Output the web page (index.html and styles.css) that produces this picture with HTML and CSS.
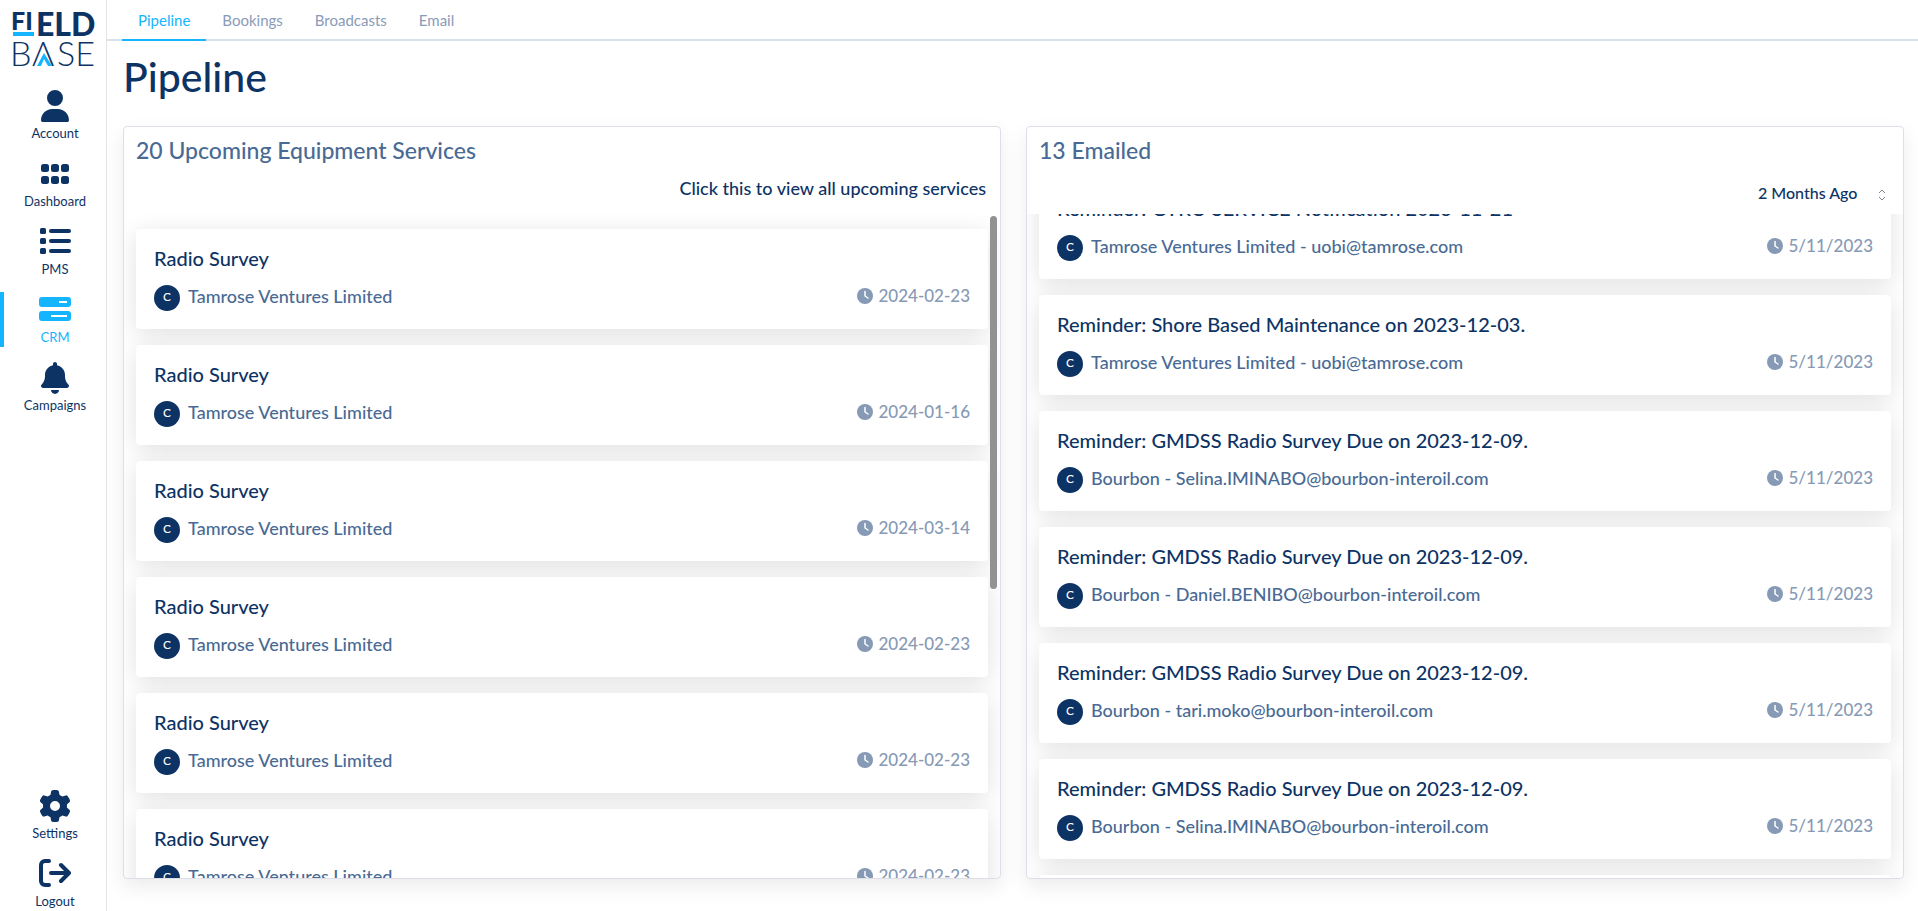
FILE: index.html
```html
<!DOCTYPE html>
<html lang="en">
<head>
<meta charset="utf-8">
<meta name="viewport" content="width=device-width, initial-scale=1">
<title>Pipeline</title>
<link rel="stylesheet" href="styles.css">
</head>
<body>
<svg class="sprite" aria-hidden="true">
  <symbol id="clock" viewBox="0 0 16 16"><circle cx="8" cy="8" r="8" fill="currentColor"/><path d="M8 3.6V8l3 2" fill="none" stroke="#fff" stroke-width="1.5" stroke-linecap="round" stroke-linejoin="round"/></symbol>
</svg>
<div class="app">
  <aside class="sidebar">
    <a class="logo" href="#" aria-label="Field Base">
      <svg width="84" height="64" viewBox="0 0 84 64">
        <text class="logo-bold" x="-1" y="19" font-size="25">FI</text>
        <rect x="1" y="21" width="21" height="4" fill="#14b4ff"/>
        <text class="logo-bold" x="24" y="25" font-size="32">ELD</text>
        <text class="logo-thin" x="-2" y="55" font-size="34">B</text>
        <text class="logo-thin" x="20" y="55" font-size="34">Λ</text>
        <text class="logo-thin" x="45" y="55" font-size="34">SE</text>
        <path d="M25 55l7-13 8 13h-4l-4-7-3 7z" fill="#14b4ff"/>
      </svg>
    </a>
    <nav class="menu">
      <a href="#"><svg width="28" height="32" viewBox="0 0 448 512"><path d="M224 256A128 128 0 1 0 224 0a128 128 0 1 0 0 256zm-45.700 48C79.800 304 0 383.800 0 482.300C0 498.700 13.300 512 29.700 512H418.300c16.400 0 29.700-13.300 29.700-29.700C448 383.800 368.200 304 269.700 304H178.300z"/></svg>Account</a>
      <a href="#"><svg width="28" height="32" viewBox="0 0 28 32"><rect y="6" width="8" height="8" rx="2.500"/><rect x="10" y="6" width="8" height="8" rx="2.500"/><rect x="20" y="6" width="8" height="8" rx="2.500"/><rect y="18" width="8" height="8" rx="2.500"/><rect x="10" y="18" width="8" height="8" rx="2.500"/><rect x="20" y="18" width="8" height="8" rx="2.500"/></svg>Dashboard</a>
      <a href="#"><svg width="32" height="32" viewBox="0 0 32 32"><rect x="1" y="2" width="6" height="6" rx="1.500"/><rect x="1" y="12" width="6" height="6" rx="1.500"/><rect x="1" y="22" width="6" height="6" rx="1.500"/><rect x="10" y="3" width="22" height="4" rx="2"/><rect x="10" y="13" width="22" height="4" rx="2"/><rect x="10" y="23" width="22" height="4" rx="2"/></svg>PMS</a>
      <a href="#" class="active" aria-current="page"><svg width="32" height="32" viewBox="0 0 32 32"><rect y="3" width="32" height="10" rx="3"/><rect y="17" width="32" height="10" rx="3"/><path d="M20 8h8M12 22h16" stroke="#fff" stroke-width="2"/></svg>CRM</a>
      <a href="#"><svg width="28" height="32" viewBox="0 0 448 512"><path d="M224 0c-17.700 0-32 14.300-32 32V51.200C119 66 64 130.600 64 208v18.800c0 47-17.300 92.400-48.500 127.600l-7.400 8.300c-8.400 9.400-10.400 22.900-5.300 34.400S19.400 416 32 416H416c12.600 0 24-7.400 29.200-18.900s3.100-25-5.300-34.400l-7.400-8.300C401.300 319.200 384 273.900 384 226.800V208c0-77.400-55-142-128-156.800V32c0-17.700-14.300-32-32-32zm45.300 493.300c12-12 18.700-28.300 18.700-45.300H224 160c0 17 6.700 33.300 18.700 45.300s28.300 18.700 45.300 18.700s33.300-6.700 45.300-18.700z"/></svg>Campaigns</a>
    </nav>
    <nav class="menu menu-bottom">
      <a href="#"><svg width="32" height="32" viewBox="0 0 512 512"><path d="M495.900 166.600c3.200 8.700 .5 18.400-6.400 24.600l-43.300 39.400c1.100 8.300 1.700 16.800 1.700 25.400s-.6 17.100-1.700 25.400l43.300 39.400c6.900 6.200 9.600 15.900 6.400 24.600c-4.400 11.900-9.700 23.300-15.800 34.300l-4.700 8.100c-6.600 11-14 21.400-22.100 31.200c-5.900 7.200-15.700 9.600-24.500 6.800l-55.700-17.700c-13.400 10.300-28.200 18.900-44 25.400l-12.500 57.100c-2 9.100-9 16.300-18.200 17.800c-13.800 2.300-28 3.500-42.500 3.500s-28.700-1.200-42.500-3.500c-9.200-1.500-16.200-8.700-18.200-17.800l-12.500-57.100c-15.800-6.500-30.600-15.100-44-25.400L83.100 425.900c-8.800 2.800-18.600 .3-24.500-6.800c-8.100-9.800-15.500-20.200-22.100-31.200l-4.700-8.100c-6.100-11-11.400-22.400-15.800-34.300c-3.200-8.700-.5-18.400 6.400-24.600l43.300-39.400C64.600 273.100 64 264.600 64 256s.6-17.100 1.700-25.400L22.400 191.200c-6.900-6.200-9.600-15.900-6.400-24.600c4.400-11.900 9.700-23.300 15.800-34.300l4.700-8.100c6.600-11 14-21.400 22.100-31.200c5.900-7.200 15.700-9.600 24.500-6.800l55.700 17.700c13.400-10.300 28.200-18.900 44-25.400l12.500-57.100c2-9.100 9-16.300 18.200-17.800C227.300 1.200 241.500 0 256 0s28.700 1.200 42.500 3.500c9.200 1.500 16.200 8.700 18.200 17.800l12.500 57.100c15.800 6.500 30.600 15.100 44 25.400l55.700-17.700c8.800-2.800 18.600-.3 24.500 6.800c8.100 9.800 15.500 20.200 22.100 31.200l4.700 8.100c6.100 11 11.400 22.400 15.800 34.300zM256 336a80 80 0 1 0 0-160 80 80 0 1 0 0 160z"/></svg>Settings</a>
      <a href="#"><svg width="32" height="32" viewBox="0 0 32 32"><path d="M10 3H6a4 4 0 0 0-4 4v16a4 4 0 0 0 4 4h4M12 15h18M22 7l8 8-8 8" fill="none" stroke="currentColor" stroke-width="4" stroke-linecap="round" stroke-linejoin="round"/></svg>Logout</a>
    </nav>
  </aside>

  <div class="content">
    <nav class="tabs">
      <a href="#" class="active" aria-current="page">Pipeline</a>
      <a href="#">Bookings</a>
      <a href="#">Broadcasts</a>
      <a href="#">Email</a>
    </nav>
    <main class="main">
      <h1>Pipeline</h1>
      <div class="board">
        <section class="panel">
          <header class="panel-head">
            <h2>20 Upcoming Equipment Services</h2>
            <a class="view-all" href="#">Click this to view all upcoming services</a>
          </header>
          <div class="list">
            <article class="card"><h3>Radio Survey</h3><div class="row"><span class="avatar">C</span><span class="who">Tamrose Ventures Limited</span><time><svg><use href="#clock"/></svg>2024-02-23</time></div></article>
            <article class="card"><h3>Radio Survey</h3><div class="row"><span class="avatar">C</span><span class="who">Tamrose Ventures Limited</span><time><svg><use href="#clock"/></svg>2024-01-16</time></div></article>
            <article class="card"><h3>Radio Survey</h3><div class="row"><span class="avatar">C</span><span class="who">Tamrose Ventures Limited</span><time><svg><use href="#clock"/></svg>2024-03-14</time></div></article>
            <article class="card"><h3>Radio Survey</h3><div class="row"><span class="avatar">C</span><span class="who">Tamrose Ventures Limited</span><time><svg><use href="#clock"/></svg>2024-02-23</time></div></article>
            <article class="card"><h3>Radio Survey</h3><div class="row"><span class="avatar">C</span><span class="who">Tamrose Ventures Limited</span><time><svg><use href="#clock"/></svg>2024-02-23</time></div></article>
            <article class="card"><h3>Radio Survey</h3><div class="row"><span class="avatar">C</span><span class="who">Tamrose Ventures Limited</span><time><svg><use href="#clock"/></svg>2024-02-23</time></div></article>
          </div>
          <span class="thumb"></span>
        </section>
        <section class="panel">
          <header class="panel-head">
            <h2>13 Emailed</h2>
            <div class="period">
              <select aria-label="Period"><option>2 Months Ago</option></select>
              <svg width="8" height="12" viewBox="0 0 8 12"><path d="M1 4l3-3 3 3M1 8l3 3 3-3" fill="none" stroke="#7d8590" stroke-width="1"/></svg>
            </div>
          </header>
          <div class="list" id="emailed">
            <article class="card"><h3>Reminder: GYRO SERVICE Notification 2023-11-21</h3><div class="row"><span class="avatar">C</span><span class="who">Tamrose Ventures Limited - uobi@tamrose.com</span><time><svg><use href="#clock"/></svg>5/11/2023</time></div></article>
            <article class="card"><h3>Reminder: Shore Based Maintenance on 2023-12-03.</h3><div class="row"><span class="avatar">C</span><span class="who">Tamrose Ventures Limited - uobi@tamrose.com</span><time><svg><use href="#clock"/></svg>5/11/2023</time></div></article>
            <article class="card"><h3>Reminder: GMDSS Radio Survey Due on 2023-12-09.</h3><div class="row"><span class="avatar">C</span><span class="who">Bourbon - Selina.IMINABO@bourbon-interoil.com</span><time><svg><use href="#clock"/></svg>5/11/2023</time></div></article>
            <article class="card"><h3>Reminder: GMDSS Radio Survey Due on 2023-12-09.</h3><div class="row"><span class="avatar">C</span><span class="who">Bourbon - Daniel.BENIBO@bourbon-interoil.com</span><time><svg><use href="#clock"/></svg>5/11/2023</time></div></article>
            <article class="card"><h3>Reminder: GMDSS Radio Survey Due on 2023-12-09.</h3><div class="row"><span class="avatar">C</span><span class="who">Bourbon - tari.moko@bourbon-interoil.com</span><time><svg><use href="#clock"/></svg>5/11/2023</time></div></article>
            <article class="card"><h3>Reminder: GMDSS Radio Survey Due on 2023-12-09.</h3><div class="row"><span class="avatar">C</span><span class="who">Bourbon - Selina.IMINABO@bourbon-interoil.com</span><time><svg><use href="#clock"/></svg>5/11/2023</time></div></article>
            <article class="card"><h3>Reminder: GMDSS Radio Survey Due on 2023-12-09.</h3><div class="row"><span class="avatar">C</span><span class="who">Bourbon - Daniel.BENIBO@bourbon-interoil.com</span><time><svg><use href="#clock"/></svg>5/11/2023</time></div></article>
          </div>
        </section>
      </div>
    </main>
  </div>
</div>
<script src="script.js"></script>
</body>
</html>
```

FILE: styles.css
```css
* { box-sizing: border-box; }
body {
  margin: 0;
  font-family: Lato, "Open Sans", sans-serif;
  color: #0d3365;
  background: #fff;
}
a { color: inherit; text-decoration: none; }
h1, h2, h3 { margin: 0; font-weight: 500; }
.sprite { display: none; }

.app { display: flex; height: 100vh; overflow: hidden; }

.sidebar {
  flex: 0 0 107px;
  display: flex;
  flex-direction: column;
  align-items: stretch;
  border-right: 1px solid #e2e4e8;
}
.logo { height: 88px; padding: 11px 0 0 12px; }
.logo svg { display: block; overflow: visible; }
.logo-bold { font-family: Lato, sans-serif; font-weight: 900; fill: #0d3365; }
.logo-thin { font-family: Lato, "Liberation Sans", sans-serif; font-weight: 300; fill: #0d3365; }
.menu { display: flex; flex-direction: column; gap: 13px; }
.menu-bottom { margin-top: auto; }
.menu a {
  display: flex;
  flex-direction: column;
  align-items: center;
  gap: 2px;
  height: 55px;
  padding: 2px 0 0 4px;
  font-size: 13px;
  line-height: 18px;
}
.menu svg { flex: none; fill: currentColor; }
.menu a.active { color: #14b4ff; border-left: 4px solid #14b4ff; padding-left: 0; }

.content { flex: 1; min-width: 0; display: flex; flex-direction: column; }
.tabs {
  display: flex;
  height: 41px;
  padding-left: 15px;
  border-bottom: 2px solid #dbe1e8;
}
.tabs a {
  height: 41px;
  padding: 10px 16px;
  font-size: 15px;
  line-height: 20px;
  color: #8a9bb8;
}
.tabs a.active { color: #14b4ff; border-bottom: 2px solid #14b4ff; }

.main {
  flex: 1;
  min-height: 0;
  display: flex;
  flex-direction: column;
  padding: 10px 14px 32px 16px;
}
h1 { font-size: 41px; line-height: 52px; margin-bottom: 23px; }
.board { flex: 1; min-height: 0; display: grid; grid-template-columns: 1fr 1fr; gap: 25px; }
.panel {
  position: relative;
  min-height: 0;
  display: flex;
  flex-direction: column;
  border: 1px solid #dcdfe7;
  border-radius: 4px;
  box-shadow: 0 8px 20px rgba(0, 0, 0, .08);
}
.panel-head {
  height: 87px;
  padding: 9px 14px 0 12px;
  display: flex;
  flex-direction: column;
}
h2 { font-size: 23px; line-height: 28px; color: #496a94; }
.view-all { align-self: flex-end; margin-top: 12px; font-size: 18px; line-height: 24px; font-weight: 500; }
.period { position: relative; align-self: flex-end; margin-top: 17px; }
.period select {
  appearance: none;
  border: 0;
  background: transparent;
  margin: 0;
  padding: 0 31px 0 0;
  font: 500 16px/24px Lato, "Open Sans", sans-serif;
  color: inherit;
}
.period svg { position: absolute; right: 3px; top: 8px; pointer-events: none; }

.list {
  flex: 1;
  min-height: 0;
  overflow-y: auto;
  scrollbar-width: none;
  padding: 15px 12px 0;
}
.card {
  height: 100px;
  margin-bottom: 16px;
  padding: 16px 18px;
  border-radius: 4px;
  background: #fff;
  box-shadow: 0 5px 25px rgba(0, 0, 0, .12);
}
h3 { font-size: 20px; line-height: 26px; margin-bottom: 12px; }
.row { display: flex; align-items: flex-start; gap: 8px; height: 28px; font-size: 18px; font-weight: 500; }
.avatar {
  width: 26px;
  height: 26px;
  margin-top: 2px;
  border-radius: 50%;
  background: #0d3365;
  color: #fff;
  font-size: 12px;
  line-height: 23px;
  text-align: center;
}
.who { flex: 1; color: #496a94; line-height: 26px; }
.row time { display: flex; align-items: center; gap: 5px; color: #8699b5; font-size: 17px; line-height: 26px; }
.row time svg { width: 16px; height: 16px; }
.thumb {
  position: absolute;
  top: 89px;
  right: 3px;
  width: 7px;
  height: 373px;
  border-radius: 4px;
  background: #929292;
}
```

FILE: script.js
```js
document.getElementById('emailed').scrollTop = 50;
```
